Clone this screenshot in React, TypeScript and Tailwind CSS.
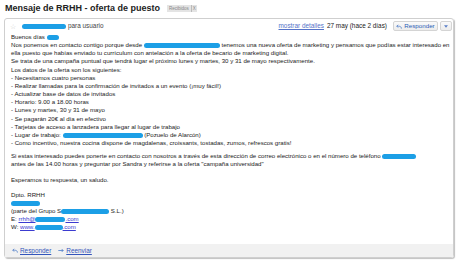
const Blot = ({ w, h = 6, className = '' }: { w: number; h?: number; className?: string }) => (
  <span
    className={`inline-block rounded-full bg-[#1c9fe6] align-middle ${className}`}
    style={{ width: w, height: h }}
  />
);

const ReplyIcon = ({ className = '' }: { className?: string }) => (
  <svg viewBox="0 0 10 8" className={className} fill="none" stroke="#3a6fc4" strokeWidth="1.2">
    <path d="M9 7.5C9 4.5 7 3.5 4 3.5H1.5" />
    <path d="M3.5 1.2L1.2 3.5L3.5 5.8" />
  </svg>
);

const ForwardIcon = ({ className = '' }: { className?: string }) => (
  <svg viewBox="0 0 10 8" className={className} fill="none" stroke="#3a6fc4" strokeWidth="1.2">
    <path d="M0.5 4H8.5" />
    <path d="M6.2 1.6L8.6 4L6.2 6.4" />
  </svg>
);

const lines = [
  '- Necesitamos cuatro personas',
  '- Realizar llamadas para la confirmación de invitados a un evento (¡muy fácil!)',
  '- Actualizar base de datos de invitados',
  '- Horario: 9.00 a 18.00 horas',
  '- Lunes y  martes, 30 y 31 de mayo',
  '- Se pagarán 20€ al día en efectivo',
  '- Tarjetas de acceso a lanzadera para llegar al lugar de trabajo',
];

export default function App() {
  return (
    <div className="relative h-[262px] w-[460px] overflow-hidden bg-white font-['Liberation_Sans',Arial,sans-serif] text-[#1a1a1a]">
      <div className="flex items-center gap-[7px] pl-[5px] pt-[3px]">
        <h1 className="text-[9px] font-bold leading-[11px] text-[#222]">Mensaje de RRHH - oferta de puesto</h1>
        <span className="flex items-center text-[4.5px] leading-[7px] text-[#888]">
          <span className="bg-[#e4e4e4] px-[2px]">Recibidos</span>
          <span className="border-l border-[#bbb] bg-[#e4e4e4] px-[1px]">X</span>
        </span>
      </div>

      <div className="ml-[4px] mr-[6px] mt-[4px] rounded-[3px] border border-[#cfcfcf] shadow-[1px_1px_1px_rgba(0,0,0,0.25)]">
        <div className="flex h-[13px] items-center pl-[5px] pr-[1px] pt-[1px] text-[6.4px]">
          <span className="text-[7px] leading-none text-[#ccc]">☆</span>
          <Blot w={44} h={5} className="ml-[6px]" />
          <span className="ml-[2px] text-[#444]">para usuario</span>
          <div className="ml-auto flex items-center">
            <span className="text-[#5573c9] underline">mostrar detalles</span>
            <span className="ml-[3px] text-[#222]">27 may (hace 2 días)</span>
            <button className="ml-[6px] flex h-[10px] w-[45px] items-center justify-center gap-[2px] rounded-[2px] border border-[#d4d4d4] bg-gradient-to-b from-[#fafafa] to-[#ececec] text-[6.2px] text-[#2a5bb5]">
              <ReplyIcon className="h-[5px] w-[6px]" />
              Responder
            </button>
            <button className="ml-[2px] flex h-[10px] w-[12px] items-center justify-center rounded-[2px] border border-[#d4d4d4] bg-gradient-to-b from-[#fafafa] to-[#ececec]">
              <svg viewBox="0 0 6 4" className="h-[3px] w-[4px]">
                <path d="M0 0H6L3 4Z" fill="#5a7fc8" />
              </svg>
            </button>
          </div>
        </div>

        <div className="whitespace-nowrap px-[6px] pt-[1px] text-[6.1px] leading-[8.15px]">
          <p>
            Buenos días <Blot w={12} h={5} />
          </p>
          <p>
            Nos ponemos en contacto contigo porque desde <Blot w={76} h={5} /> tenemos una nueva oferta de marketing y pensamos que podías estar interesado en
            <br />
            ella puesto que habías enviado tu currículum con antelación a la oferta de becario de marketing digital.
          </p>
          <p>Se trata de una campaña puntual que tendrá lugar el próximo lunes y martes,  30  y 31 de mayo respectivamente.</p>
          <p>Los datos de la oferta son los siguientes:</p>
          {lines.map((l) => (
            <p key={l}>{l}</p>
          ))}
          <p>
            - Lugar de trabajo: <Blot w={80} h={5} /> (Pozuelo de Alarcón)
          </p>
          <p>- Como incentivo, nuestra cocina dispone de magdalenas, croissants, tostadas, zumos, refrescos gratis!</p>

          <p className="mt-[5px]">
            Si estas interesado puedes ponerte en contacto con nosotros a través de esta dirección de correo electrónico o en el número de teléfono <Blot w={34} h={5} />
            <br />
            antes de las 14.00 horas y preguntar por Sandra y referirse a la oferta "campaña universidad"
          </p>

          <p className="mt-[7px]">Esperamos tu respuesta, un saludo.</p>

          <div className="mt-[7px]">
            <p>Dpto. RRHH</p>
            <p>
              <Blot w={29} h={5} />
            </p>
            <p>
              (parte del Grupo S<Blot w={48} h={5} /> S.L.)
            </p>
            <p>
              E: <span className="text-[#3b3bd0] underline">rrhh@<Blot w={30} h={5} />.com</span>
            </p>
            <p>
              W: <span className="text-[#3b3bd0] underline">www.<Blot w={28} h={5} />.com</span>
            </p>
          </div>
        </div>

        <div className="mt-[13px] flex h-[13px] items-center gap-[7px] bg-[#f1f1f1] pl-[7px] text-[6.4px]">
          <span className="flex items-center gap-[2px] text-[#3355bb] underline">
            <ReplyIcon className="h-[5px] w-[6px]" />
            Responder
          </span>
          <span className="flex items-center gap-[2px] text-[#3355bb] underline">
            <ForwardIcon className="h-[5px] w-[6px]" />
            Reenviar
          </span>
        </div>
      </div>
    </div>
  );
}
